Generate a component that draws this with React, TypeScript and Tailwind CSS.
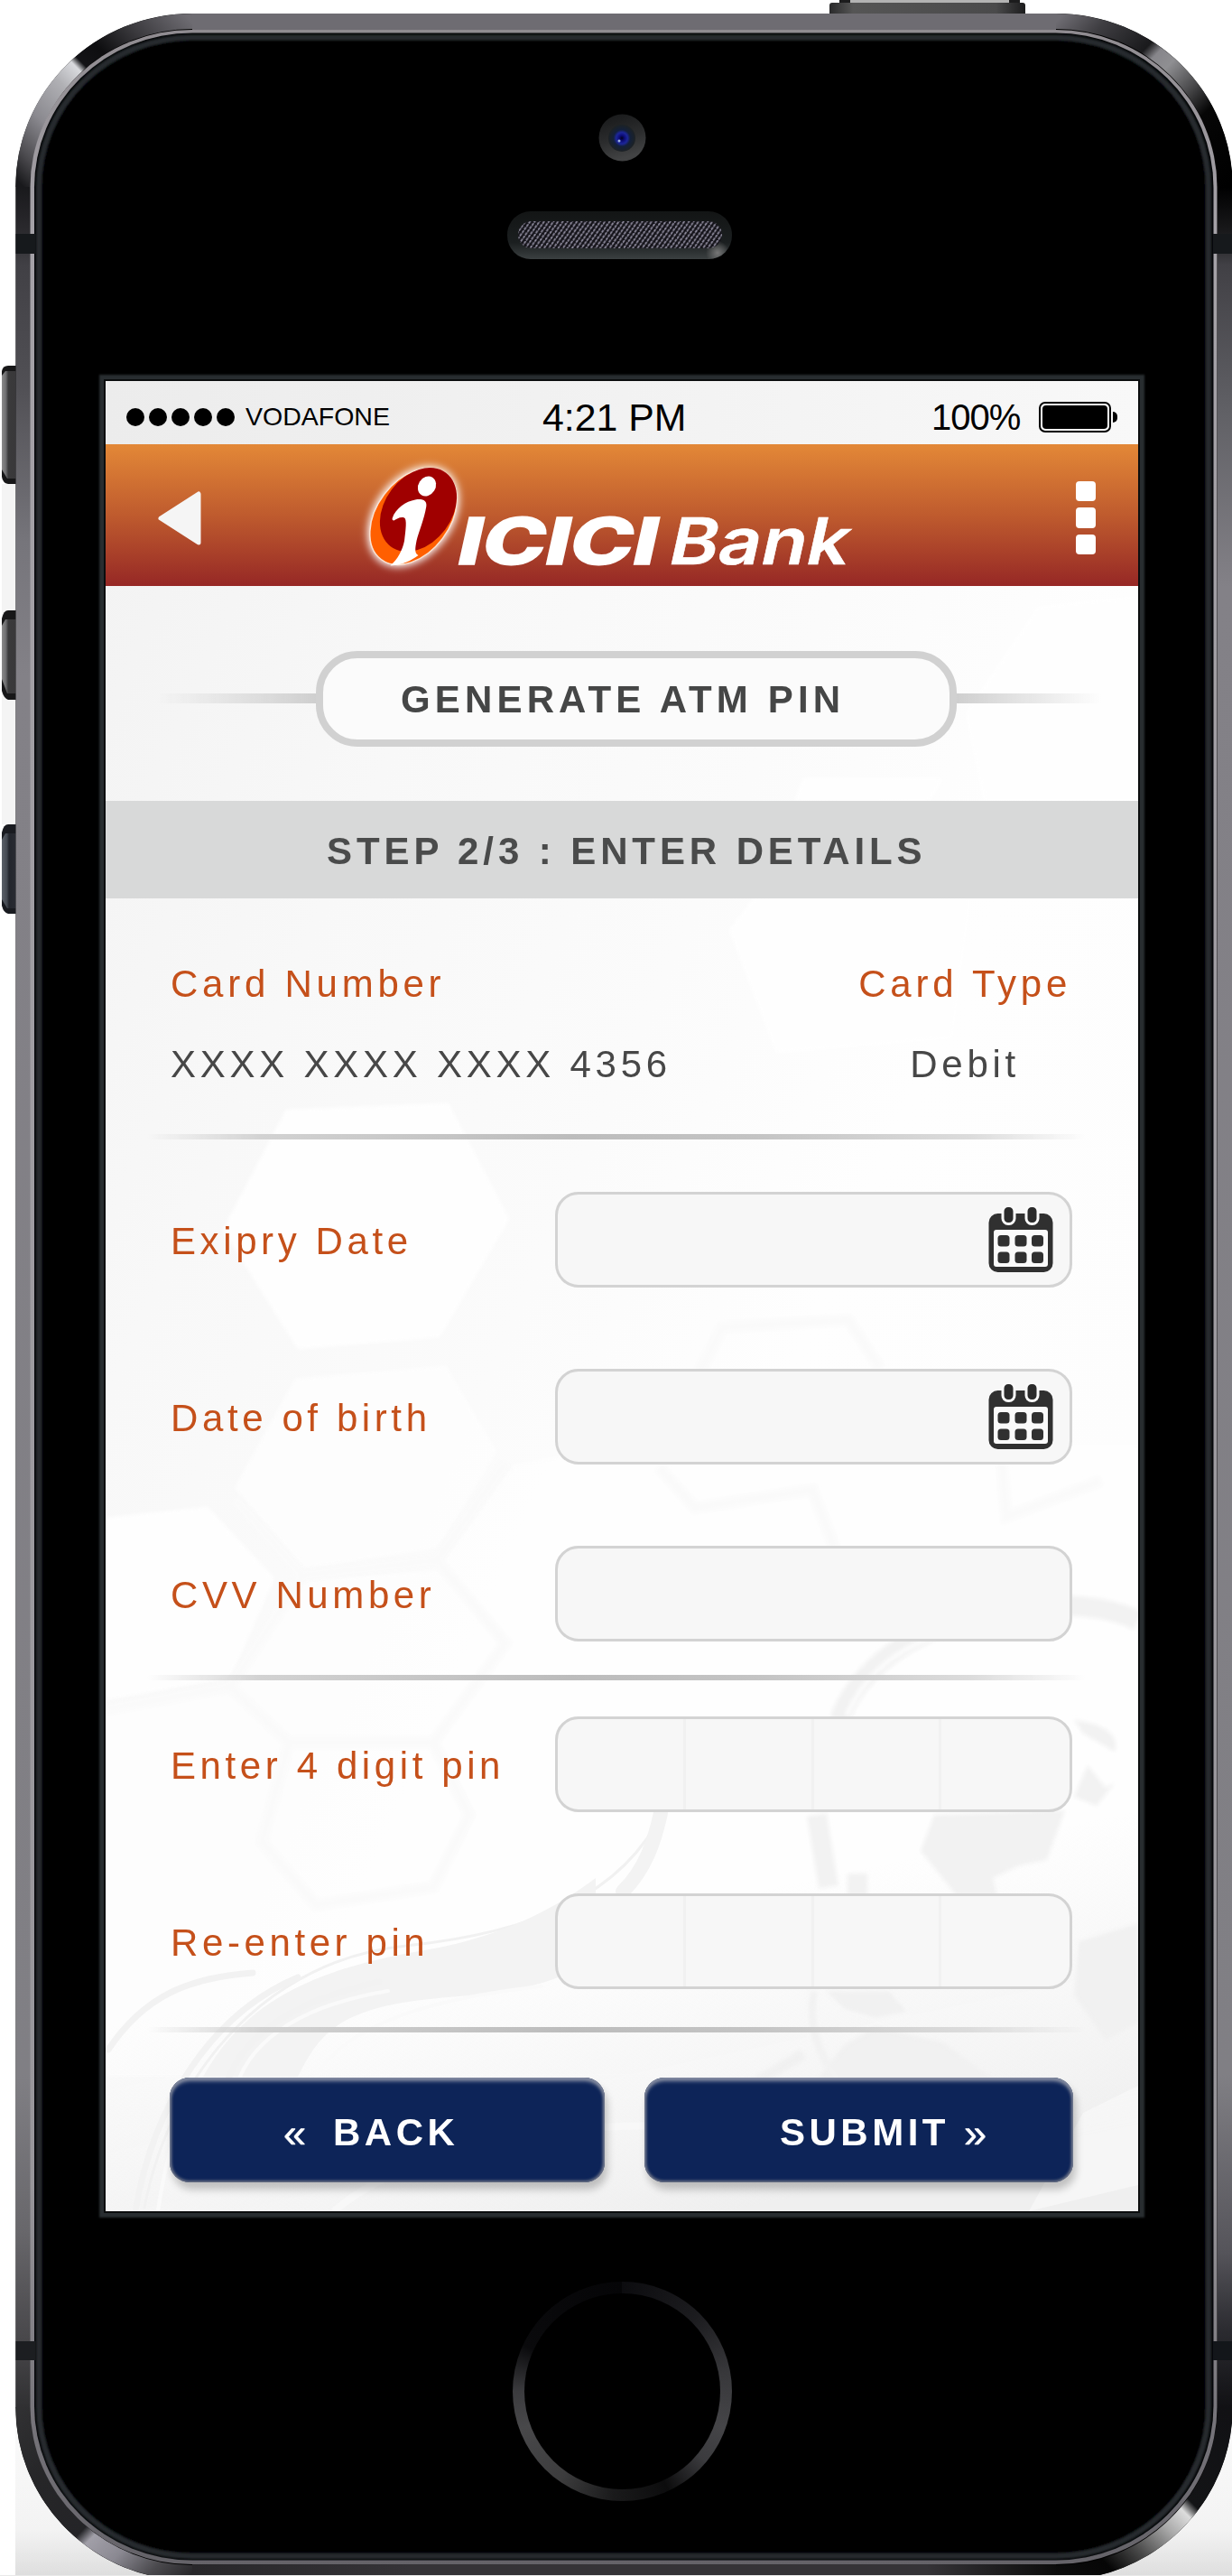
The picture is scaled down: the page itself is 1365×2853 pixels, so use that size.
import React from "react";

const SANS = "font-['Liberation_Sans',Arial,sans-serif]";

function DeviceFrame() {
  return (
    <svg className="absolute left-0 top-0" width="1365" height="2853" viewBox="0 0 1365 2853" fill="none" aria-hidden="true">
      <defs>
        <linearGradient id="side" gradientUnits="userSpaceOnUse" x1="0" y1="207" x2="0" y2="2667">
          <stop offset="0" stopColor="#19191c" />
          <stop offset="0.02" stopColor="#2b2a2e" />
          <stop offset="0.035" stopColor="#414045" />
          <stop offset="0.09" stopColor="#515055" />
          <stop offset="0.16" stopColor="#76757b" />
          <stop offset="0.22" stopColor="#838187" />
          <stop offset="0.85" stopColor="#807f84" />
          <stop offset="0.92" stopColor="#68676b" />
          <stop offset="0.97" stopColor="#48474a" />
          <stop offset="1" stopColor="#303032" />
        </linearGradient>
        <linearGradient id="sideR" gradientUnits="userSpaceOnUse" x1="0" y1="207" x2="0" y2="2667">
          <stop offset="0" stopColor="#000" />
          <stop offset="0.02" stopColor="#19191b" />
          <stop offset="0.035" stopColor="#414045" />
          <stop offset="0.1" stopColor="#606065" />
          <stop offset="0.18" stopColor="#838187" />
          <stop offset="0.85" stopColor="#807f84" />
          <stop offset="0.93" stopColor="#55545a" />
          <stop offset="0.965" stopColor="#2b2b30" />
          <stop offset="1" stopColor="#111114" />
        </linearGradient>
        <linearGradient id="tl" gradientUnits="userSpaceOnUse" x1="213" y1="24" x2="26" y2="207">
          <stop offset="0" stopColor="#6e6c72" />
          <stop offset="0.2" stopColor="#3b3a3e" />
          <stop offset="0.36" stopColor="#0e0e10" />
          <stop offset="0.455" stopColor="#131316" />
          <stop offset="0.485" stopColor="#d9dade" />
          <stop offset="0.58" stopColor="#b0b0b4" />
          <stop offset="0.75" stopColor="#8a898f" />
          <stop offset="0.9" stopColor="#4c4b4f" />
          <stop offset="1" stopColor="#19191c" />
        </linearGradient>
        <linearGradient id="tr" gradientUnits="userSpaceOnUse" x1="1170" y1="24" x2="1357" y2="207">
          <stop offset="0" stopColor="#6e6c72" />
          <stop offset="0.15" stopColor="#3e3d41" />
          <stop offset="0.35" stopColor="#1a1a1c" />
          <stop offset="0.4" stopColor="#87868b" />
          <stop offset="0.47" stopColor="#8f8f92" />
          <stop offset="0.6" stopColor="#4b4b4d" />
          <stop offset="0.72" stopColor="#060606" />
          <stop offset="1" stopColor="#000" />
        </linearGradient>
        <linearGradient id="bl" gradientUnits="userSpaceOnUse" x1="26" y1="2667" x2="213" y2="2850">
          <stop offset="0" stopColor="#303032" />
          <stop offset="0.25" stopColor="#262628" />
          <stop offset="0.54" stopColor="#242427" />
          <stop offset="0.59" stopColor="#a19fa8" />
          <stop offset="0.72" stopColor="#8b8992" />
          <stop offset="0.87" stopColor="#4b4a4e" />
          <stop offset="1" stopColor="#28272a" />
        </linearGradient>
        <linearGradient id="br" gradientUnits="userSpaceOnUse" x1="1357" y1="2667" x2="1170" y2="2850">
          <stop offset="0" stopColor="#111114" />
          <stop offset="0.38" stopColor="#131416" />
          <stop offset="0.43" stopColor="#dcdcdc" />
          <stop offset="0.53" stopColor="#a9a9a9" />
          <stop offset="0.68" stopColor="#4a4a4a" />
          <stop offset="0.82" stopColor="#060606" />
          <stop offset="1" stopColor="#0c0c0c" />
        </linearGradient>
        <linearGradient id="bottomRim" gradientUnits="userSpaceOnUse" x1="213" y1="0" x2="1170" y2="0">
          <stop offset="0" stopColor="#28272a" />
          <stop offset="0.25" stopColor="#353337" />
          <stop offset="0.85" stopColor="#353337" />
          <stop offset="1" stopColor="#0c0c0c" />
        </linearGradient>
        <linearGradient id="lip" gradientUnits="userSpaceOnUse" x1="0" y1="30" x2="0" y2="2845">
          <stop offset="0" stopColor="#8f8b90" />
          <stop offset="0.08" stopColor="#a5a2a8" />
          <stop offset="0.85" stopColor="#98969b" />
          <stop offset="0.94" stopColor="#77757b" />
          <stop offset="1" stopColor="#646268" />
        </linearGradient>
        <linearGradient id="floor" x1="0" y1="0" x2="0" y2="1">
          <stop offset="0" stopColor="#fff" />
          <stop offset="0.8" stopColor="#f3f3f3" />
          <stop offset="1" stopColor="#dedede" />
        </linearGradient>
        <linearGradient id="key" x1="0" y1="0" x2="1" y2="0">
          <stop offset="0" stopColor="#8b8b8b" />
          <stop offset="0.28" stopColor="#6e6e70" />
          <stop offset="0.45" stopColor="#3a3a3b" />
          <stop offset="1" stopColor="#39383a" />
        </linearGradient>
        <linearGradient id="keyBlue" x1="0" y1="0" x2="1" y2="0">
          <stop offset="0" stopColor="#5b6169" />
          <stop offset="0.35" stopColor="#444951" />
          <stop offset="0.5" stopColor="#23262d" />
          <stop offset="1" stopColor="#2a2c33" />
        </linearGradient>
        <linearGradient id="power" x1="0" y1="0" x2="1" y2="0">
          <stop offset="0" stopColor="#2a2a2b" />
          <stop offset="0.12" stopColor="#555" />
          <stop offset="0.85" stopColor="#4a4a4b" />
          <stop offset="1" stopColor="#1c1c1d" />
        </linearGradient>
        <filter id="soft" x="-2%" y="-2%" width="104%" height="104%">
          <feGaussianBlur stdDeviation="1.2" />
        </filter>
      </defs>

      <rect x="17" y="2600" width="1348" height="252" fill="url(#floor)" />
      <rect x="2" y="536" width="16" height="377" fill="#f4f4f4" />

      <path d="M2 411Q3 405 9 405H18V536H9Q3 535 2 528Z" fill="#171718" />
      <path d="M2 416L6 411H18V530H8L2 520Z" fill="url(#key)" />
      <path d="M2 685Q4 676 9 676H18V775H9Q4 773 2 765Z" fill="#171718" />
      <path d="M2 693L6 686H18V768H8L2 752Z" fill="url(#key)" />
      <path d="M2 922Q4 913 9 913H18V1012H9Q4 1011 2 1003Z" fill="#191b20" />
      <path d="M2 930L6 923H18V1006H8L2 996Z" fill="url(#keyBlue)" />

      <rect x="930" y="-2" width="200" height="7" fill="#1c1c1d" />
      <rect x="942" y="-2" width="176" height="5" fill="#b3b3b3" />
      <rect x="919" y="3" width="217" height="16" rx="3" fill="url(#power)" />

      <rect x="17.500" y="15" width="1348" height="2843" rx="195" ry="192" fill="#000" />
      <path d="M213 24H1170" stroke="#6e6c72" strokeWidth="18" />
      <path d="M213 2849H1170" stroke="url(#bottomRim)" strokeWidth="18" />
      <rect x="17.500" y="207" width="16.500" height="2460" fill="url(#side)" />
      <rect x="1349" y="207" width="16.500" height="2460" fill="url(#sideR)" />
      <path d="M213 23.500A187.500 183.500 0 0 0 25.700 207" stroke="url(#tl)" strokeWidth="17" />
      <path d="M1170 23.500A187.500 183.500 0 0 1 1357.300 207" stroke="url(#tr)" strokeWidth="17" />
      <path d="M25.700 2666A187.500 183.500 0 0 0 213 2849.500" stroke="url(#bl)" strokeWidth="17" />
      <path d="M1357.300 2666A187.500 183.500 0 0 1 1170 2849.500" stroke="url(#br)" strokeWidth="17" />

      <rect x="33.500" y="33" width="1315" height="2807" rx="179" ry="174" fill="url(#lip)" />
      <rect x="38" y="36.500" width="1306.500" height="2799" rx="175" ry="171" fill="#050708" />
      <rect x="43" y="41.500" width="1296" height="2789.500" rx="170" ry="166" stroke="#262c2f" strokeWidth="6" fill="#000" filter="url(#soft)" />

      <rect x="17.500" y="259" width="22" height="22" fill="#16191c" />
      <rect x="1344" y="259" width="21" height="22" fill="#16191c" />
      <rect x="17.500" y="2593" width="22" height="21" fill="#1c1e21" />
      <rect x="1344" y="2593" width="21" height="21" fill="#13161a" />
      <rect x="0" y="2852" width="1365" height="1" fill="#e9e9e9" />
    </svg>
  );
}

function Camera() {
  return (
    <svg className="mt-[126px]" width="53" height="53" viewBox="0 0 53 53" aria-hidden="true">
      <defs>
        <linearGradient id="camRing" x1="0" y1="0" x2="0.3" y2="1">
          <stop offset="0" stopColor="#161718" />
          <stop offset="0.6" stopColor="#2c2d2e" />
          <stop offset="1" stopColor="#424344" />
        </linearGradient>
        <radialGradient id="lens">
          <stop offset="0" stopColor="#02021c" />
          <stop offset="0.2" stopColor="#0c0c78" />
          <stop offset="0.42" stopColor="#1c2699" />
          <stop offset="0.62" stopColor="#13203a" />
          <stop offset="1" stopColor="#1d2224" />
        </radialGradient>
      </defs>
      <circle cx="26.500" cy="26.500" r="26" fill="url(#camRing)" />
      <circle cx="26" cy="27" r="15" fill="url(#lens)" />
      <circle cx="23" cy="30" r="1.500" fill="#9fb4e0" />
    </svg>
  );
}

function Speaker() {
  return (
    <svg className="mr-[6px] mt-[55px]" width="249" height="54" viewBox="0 0 249 54" aria-hidden="true">
      <defs>
        <linearGradient id="spk" x1="0" y1="0" x2="0" y2="1">
          <stop offset="0" stopColor="#131515" />
          <stop offset="0.65" stopColor="#1b1f20" />
          <stop offset="1" stopColor="#3b4041" />
        </linearGradient>
        <radialGradient id="spkGlow" cx="0.5" cy="0.5" r="0.5">
          <stop offset="0" stopColor="#777" />
          <stop offset="1" stopColor="#777" stopOpacity="0" />
        </radialGradient>
        <pattern id="mesh" width="6" height="6" patternUnits="userSpaceOnUse" patternTransform="rotate(-10)">
          <rect width="6" height="6" fill="#131218" />
          <path d="M0 2.500L2.500 0M3 5.500L5.500 3" stroke="#8d8a9c" strokeWidth="1.800" />
        </pattern>
        <clipPath id="spkClip">
          <rect x="0" y="0" width="249" height="53" rx="26" />
        </clipPath>
      </defs>
      <g clipPath="url(#spkClip)">
        <rect x="0" y="0" width="249" height="53" fill="url(#spk)" />
        <circle cx="233" cy="46" r="13" fill="url(#spkGlow)" />
      </g>
      <rect x="12" y="11" width="226" height="30" rx="15" fill="url(#mesh)" />
    </svg>
  );
}

function ScreenBackdrop() {
  return (
    <svg className="absolute inset-0" width="1144" height="2027" viewBox="117 422 1144 2027" fill="none" aria-hidden="true">
      <defs>
        <linearGradient id="paper" x1="0" y1="0" x2="0.9" y2="0.7">
          <stop offset="0" stopColor="#f2f2f2" />
          <stop offset="0.3" stopColor="#f8f8f8" />
          <stop offset="0.55" stopColor="#fbfbfb" />
          <stop offset="0.75" stopColor="#fefefe" />
          <stop offset="1" stopColor="#fdfdfd" />
        </linearGradient>
        <linearGradient id="foot" x1="0.2" y1="0" x2="0.6" y2="1">
          <stop offset="0.5" stopColor="#f2f2f2" stopOpacity="0" />
          <stop offset="1" stopColor="#efefef" />
        </linearGradient>
        <filter id="haze">
          <feGaussianBlur stdDeviation="2" />
        </filter>
      </defs>
      <rect x="117" y="422" width="1144" height="2027" fill="url(#paper)" />
      <g fill="#fefefe" filter="url(#haze)">
        <path d="M317 1229L497 1222L564 1350L487 1481L330 1494L247 1362Z" />
        <path d="M327 1527L494 1513L550 1608L484 1714L337 1737L260 1648Z" opacity="0.8" />
        <path d="M117 1681L230 1669L304 1748L255 1858L117 1883Z" />
        <path d="M570 1622L700 1600H1261V2300H117V1895L260 1868L320 1752L484 1740Z" opacity="0.8" />
        <path d="M835 995L1075 995L1055 1150L860 1166L808 1030Z" />
        <path d="M890 862H1045L1030 887H880ZM1150 672L1261 660V887H1090L1070 790Z" />
      </g>
      <rect x="117" y="1850" width="1144" height="599" fill="url(#foot)" />
      <g stroke="#fafafa" strokeWidth="12" filter="url(#haze)">
        <path d="M260 1660L335 1745L484 1728L560 1620M335 1745L255 1868L320 1930L480 1930L560 1820L484 1728M117 1893L255 1868M320 1930L290 2040L350 2110L480 2090L520 2010L480 1930" />
        <path d="M730 1625L770 1670L900 1650L925 1715M1110 1620L1115 1680L1220 1640M770 1530L800 1470L940 1462L975 1515" />
      </g>
      <g strokeLinecap="round">
        <path d="M160 2445C190 2290 300 2170 450 2155C590 2140 690 2100 735 2005" stroke="#f1f1f1" strokeWidth="3" />
        <path d="M225 2300C270 2220 340 2182 470 2160C560 2145 620 2110 660 2080V2170C570 2225 480 2200 400 2230C360 2245 345 2270 330 2300Z" fill="#f3f3f3" />
        <path d="M690 2095C715 2070 725 2040 732 2008" stroke="#f3f3f3" strokeWidth="16" />
        <path d="M120 2270C160 2210 210 2190 280 2185M150 2449C170 2330 235 2230 330 2190M250 2310C270 2250 330 2215 420 2195" stroke="#f2f2f2" strokeWidth="7" />
        <path d="M262 2310C280 2255 340 2220 430 2205M175 2449C185 2380 200 2340 220 2310M345 2310C370 2250 460 2215 600 2200" stroke="#fafafa" strokeWidth="4" />
      </g>
      <g filter="url(#haze)">
        <path d="M930 1905C950 1850 1010 1800 1110 1785C1180 1772 1230 1780 1261 1795" stroke="#f2f2f2" strokeWidth="22" />
        <path d="M938 1900C960 1850 1000 1820 1060 1805" stroke="#fdfdfd" strokeWidth="5" />
        <path d="M1035 2010L1180 2005L1160 2060L1130 2066L1100 2080L1105 2100L1060 2100L1020 2050ZM1190 1905C1230 1910 1240 1925 1235 1940L1200 1920ZM1205 1955L1225 1980L1235 1975L1215 2000L1190 1990Z" fill="#f2f2f2" />
        <path d="M1195 2150L1261 2130V2240L1225 2260L1190 2210ZM915 2205L985 2205L1005 2228L970 2235L935 2225ZM935 2265L970 2245L1045 2262L1110 2310H900Z" fill="#f1f1f1" />
        <path d="M905 2010L918 2090M950 2075V2100" stroke="#f2f2f2" strokeWidth="22" />
        <path d="M902 2205C895 2240 905 2275 930 2305" stroke="#f2f2f2" strokeWidth="9" />
        <path d="M815 2320L890 2275" stroke="#f1f1f1" strokeWidth="12" />
      </g>
      <path d="M370 2449C450 2380 620 2350 740 2355L840 2330" stroke="#f8f8f8" strokeWidth="8" />
      <path d="M1200 2340L1261 2310V2420L1140 2449" fill="#fafafa" opacity="0.6" />
    </svg>
  );
}

function StatusBar() {
  return (
    <div className="flex h-[70px] items-center bg-gradient-to-r from-[#ececec] to-[#f8f8f8] pl-[23px] text-black">
      <div className="flex gap-[5px]">
        {[0, 1, 2, 3, 4].map((n) => (
          <span key={n} className="mt-[9px] size-5 rounded-full bg-black" />
        ))}
      </div>
      <span className="ml-[12px] mt-[9px] w-[164px] text-[28.500px] leading-none">VODAFONE</span>
      <span className="ml-[165px] mt-[10px] w-[431px] whitespace-nowrap text-[42.800px] leading-none">4:21 PM</span>
      <span className="mt-[9px] w-[114px] whitespace-nowrap text-[40px] leading-none tracking-[-1px]">100%</span>
      <div className="ml-[5px] mt-[10px] flex items-center">
        <div className="h-[34px] w-20 rounded-[7px] border-2 border-black p-[2px]">
          <div className="size-full rounded-[4px] bg-black" />
        </div>
        <div className="ml-[2px] h-3 w-[5px] rounded-r-full bg-black" />
      </div>
    </div>
  );
}

function BankLogo() {
  return (
    <svg className="overflow-visible" width="560" height="140" viewBox="395 500 560 140" aria-label="ICICI Bank">
      <defs>
        <filter id="glow" x="-30%" y="-30%" width="160%" height="160%">
          <feGaussianBlur stdDeviation="4" />
        </filter>
      </defs>
      <g>
        <ellipse cx="458" cy="571" rx="43" ry="62" transform="rotate(37 458 571)" fill="#fff" filter="url(#glow)" />
        <ellipse cx="458" cy="571" rx="40.500" ry="59.500" transform="rotate(37 458 571)" fill="#ff5f00" stroke="#fbe3d4" strokeWidth="1.500" />
        <ellipse cx="463.500" cy="563.500" rx="37" ry="51" transform="rotate(37 463.500 563.500)" fill="#a00000" />
        <ellipse cx="473" cy="537.500" rx="9.500" ry="11.500" transform="rotate(32 473 537.500)" fill="#fff" />
        <path d="M434.700 573C438 562 450 554 460 552.400C468 551 473.500 553 472.300 560C470 574 464 588 461.500 598C460 606 459 612 463.500 614C455 620 446 625 432.500 625.500C441 618 446 608 448 598C449.500 586 451 574 448 572.500C443 571 440 574 436.500 575.500C435 575.500 434.300 574.500 434.700 573Z" fill="#fff" />
      </g>
      <g fill="#fff" stroke="#fff" fontFamily="Inter, 'Liberation Sans', sans-serif">
        <text transform="translate(503.500 624) skewX(-12.500)" fontSize="71.500" fontWeight="800" strokeWidth="1.500" textLength="221" lengthAdjust="spacingAndGlyphs">ICICI</text>
        <text transform="translate(738 624) skewX(-12.500)" fontSize="71.500" fontWeight="600" strokeWidth="0.500" textLength="199" lengthAdjust="spacingAndGlyphs">Bank</text>
      </g>
    </svg>
  );
}

function AppHeader() {
  return (
    <header className="flex h-[157px] items-center bg-gradient-to-b from-[#e38837] via-[#bf5b2e] to-[#962725]">
      <button aria-label="Back" className="ml-[57px] mt-[6px]">
        <svg width="50" height="62" viewBox="0 0 50 62">
          <path d="M4 31L46 4V58Z" fill="#f5f5f5" stroke="#f5f5f5" strokeWidth="5" strokeLinejoin="round" />
        </svg>
      </button>
      <div className="ml-[171px]">
        <BankLogo />
      </div>
      <button aria-label="Menu" className="ml-[237px] mt-[6px] flex flex-col gap-[7px]">
        <span className="h-[22.500px] w-[22px] rounded-[4px] bg-white" />
        <span className="h-[22.500px] w-[22px] rounded-[4px] bg-white" />
        <span className="h-[22.500px] w-[22px] rounded-[4px] bg-white" />
      </button>
    </header>
  );
}

function Divider() {
  return (
    <div className="ml-[46px] h-[6px] w-[1040px] shrink-0 bg-[linear-gradient(to_right,transparent,#d2d2d2_12%,#bcbcbc_45%,#c4c4c4_65%,#dcdcdc_88%,transparent)]" />
  );
}

function CalendarIcon() {
  return (
    <svg width="74" height="74" viewBox="0 0 74 74" aria-hidden="true">
      <rect x="1.500" y="8" width="71" height="65" rx="10" fill="#303030" />
      <rect x="7" y="26" width="60" height="41" rx="3" fill="#fafafa" />
      <g fill="#2b2b2b" stroke="#fafafa" strokeWidth="3">
        <rect x="17" y="-0.500" width="13" height="20" rx="6" />
        <rect x="43" y="-0.500" width="13" height="20" rx="6" />
      </g>
      <g fill="#303030">
        {[32, 50.5].map((y) =>
          [11.500, 30.5, 49].map((x) => <rect key={x + "-" + y} x={x} y={y} width="13" height="12.500" rx="3.500" />)
        )}
      </g>
    </svg>
  );
}

function Field({ label, kind }: { label: string; kind?: "date" | "pin" }) {
  return (
    <div className="flex h-[106px] shrink-0 items-center pl-[72px]">
      <label className="w-[426px] pt-[4px] text-[42px] leading-none tracking-[4.600px] whitespace-nowrap text-[#c5501a]">{label}</label>
      <div className="flex h-[106px] w-[573px] items-center justify-end overflow-hidden rounded-[26px] border-[3px] border-[#d3d3d3] bg-[#f7f7f7]">
        {kind === "date" && (
          <div className="mr-[17px]">
            <CalendarIcon />
          </div>
        )}
        {kind === "pin" && (
          <div className="grid size-full grid-cols-4 divide-x-[3px] divide-[#f1f1f1]">
            <span />
            <span />
            <span />
            <span />
          </div>
        )}
      </div>
    </div>
  );
}

export default function App() {
  return (
    <div className={`relative flex h-[2853px] w-[1365px] flex-col items-center overflow-hidden bg-white pl-[13px] ${SANS}`}>
      <DeviceFrame />
      <div className="relative flex h-[422px] shrink-0 flex-col items-center">
        <Camera />
        <Speaker />
      </div>

      <main className="relative flex h-[2027px] w-[1144px] shrink-0 flex-col shadow-[0_0_0_2px_#0b0d0e,0_0_2px_7px_#282d30]">
        <ScreenBackdrop />
        <div className="relative flex flex-col">
          <StatusBar />
          <AppHeader />

          <div className="flex h-[238px] items-center pl-[58px] pt-[11px]">
            <div className="h-[11px] w-[175px] bg-gradient-to-r from-transparent to-[#cfcfcf]" />
            <h1 className="h-[106px] w-[710px] whitespace-nowrap rounded-[46px] border-8 border-[#d1d1d1] bg-[#fbfbfb] pl-[86px] pt-[25px] text-[42px] font-bold leading-none tracking-[5.150px] text-[#454646]">
              GENERATE ATM PIN
            </h1>
            <div className="h-[11px] w-[160px] bg-gradient-to-l from-transparent to-[#cfcfcf]" />
          </div>

          <h2 className="h-[108px] whitespace-nowrap bg-[#d8d9d9] pl-[245px] pt-[35px] text-[42px] font-bold leading-none tracking-[4.900px] text-[#4a4b4b]">
            STEP 2/3 : ENTER DETAILS
          </h2>

          <div className="flex h-[261px] justify-between pl-[72px] pr-[71px] pt-[74px] text-[42px] leading-none tracking-[4.750px]">
            <div className="flex flex-col gap-[47px]">
              <span className="text-[#c5501a]">Card Number</span>
              <span className="text-[#474747]">XXXX XXXX XXXX 4356</span>
            </div>
            <div className="mr-[3px] flex flex-col items-center gap-[47px]">
              <span className="text-[#c5501a]">Card Type</span>
              <span className="text-[#474747]">Debit</span>
            </div>
          </div>

          <Divider />
          <div className="mt-[58px] flex flex-col gap-[90px]">
            <Field label="Exipry Date" kind="date" />
            <Field label="Date of birth" kind="date" />
            <Field label="CVV Number" />
          </div>
          <div className="h-[37px]" />
          <Divider />
          <div className="mt-[40px] flex flex-col gap-[90px]">
            <Field label="Enter 4 digit pin" kind="pin" />
            <Field label="Re-enter pin" kind="pin" />
          </div>
          <div className="h-[42px]" />
          <Divider />

          <div className="mt-[50px] flex gap-[44px] pl-[71px] text-[42px] leading-none tracking-[4.500px] text-white">
            <button className="flex h-[116px] w-[482px] items-center rounded-[22px] bg-[#0d2458] pl-[126px] pt-[6px] shadow-[inset_0_4px_4px_#8089a0,inset_0_0_3px_2px_#6b7183,3px_8px_8px_rgba(0,0,0,0.22)]">
              <span className="w-[55px] text-left text-[45px] [-webkit-text-stroke:0.500px_white]">«</span>
              <span className="font-bold">BACK</span>
            </button>
            <button className="flex h-[116px] w-[475px] items-center rounded-[22px] bg-[#0d2458] pl-[150px] pt-[6px] shadow-[inset_0_4px_4px_#8089a0,inset_0_0_3px_2px_#6b7183,3px_8px_8px_rgba(0,0,0,0.22)]">
              <span className="w-[204px] text-left font-bold">SUBMIT</span>
              <span className="text-[45px] [-webkit-text-stroke:0.500px_white]">»</span>
            </button>
          </div>
        </div>
      </main>

      <button
        aria-label="Home"
        className="relative mt-[78px] size-[243px] shrink-0 rounded-full bg-[conic-gradient(#0c0c0f,#1c1c1f_45deg,#38383b_80deg,#454548_110deg,#3b3b3e_130deg,#0c0c0d_155deg,#1a1a1b_185deg,#3c3c3d_215deg,#48484a_250deg,#3b3b3e_270deg,#0a0a0c_295deg,#050507)] p-[13px]"
      >
        <span className="block size-full rounded-full bg-black" />
      </button>
    </div>
  );
}
